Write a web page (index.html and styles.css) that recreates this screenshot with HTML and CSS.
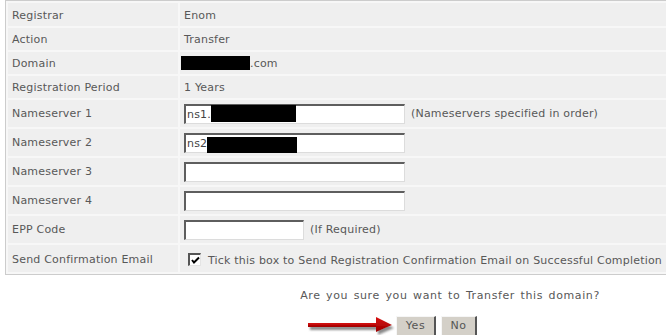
FILE: index.html
```html
<!DOCTYPE html>
<html>
<head>
<meta charset="utf-8">
<title>Transfer Domain</title>
<link rel="stylesheet" href="styles.css">
</head>
<body>
<div class="page">
  <table class="form">
    <tr class="trow">
      <td class="label">Registrar</td>
      <td class="field">Enom</td>
    </tr>
    <tr class="trow">
      <td class="label">Action</td>
      <td class="field">Transfer</td>
    </tr>
    <tr class="trow">
      <td class="label">Domain</td>
      <td class="field"><span class="redact-inline"></span>.com</td>
    </tr>
    <tr class="trow">
      <td class="label">Registration Period</td>
      <td class="field">1 Years</td>
    </tr>
    <tr class="irow">
      <td class="label">Nameserver 1</td>
      <td class="field"><span class="inwrap"><input class="text ns" type="text" value="ns1."><span class="redact r1"></span></span><span class="hint">(Nameservers specified in order)</span></td>
    </tr>
    <tr class="irow">
      <td class="label">Nameserver 2</td>
      <td class="field"><span class="inwrap"><input class="text ns" type="text" value="ns2"><span class="redact r2"></span></span></td>
    </tr>
    <tr class="irow">
      <td class="label">Nameserver 3</td>
      <td class="field"><span class="inwrap"><input class="text ns" type="text" value=""></span></td>
    </tr>
    <tr class="irow">
      <td class="label">Nameserver 4</td>
      <td class="field"><span class="inwrap"><input class="text ns" type="text" value=""></span></td>
    </tr>
    <tr class="irow">
      <td class="label">EPP Code</td>
      <td class="field"><span class="inwrap"><input class="text epp" type="text" value=""></span><span class="hint">(If Required)</span></td>
    </tr>
    <tr class="crow">
      <td class="label">Send Confirmation Email</td>
      <td class="field"><span class="check"><svg width="9" height="9" viewBox="0 0 9 9"><path d="M1 4 L3 6.5 L8 1.5" fill="none" stroke="#000" stroke-width="2"/></svg></span><span class="checktext">Tick this box to Send Registration Confirmation Email on Successful Completion</span></td>
    </tr>
  </table>

  <p class="confirm">Are you sure you want to Transfer this domain?</p>

  <div class="actions">
    <svg class="arrow" width="90" height="22" viewBox="0 0 90 22">
      <defs>
        <filter id="sh" x="-10%" y="-40%" width="130%" height="200%">
          <feGaussianBlur in="SourceAlpha" stdDeviation="1.2"/>
          <feOffset dx="2" dy="3" result="b"/>
          <feFlood flood-color="#6e6e6e" flood-opacity="0.8"/>
          <feComposite in2="b" operator="in"/>
          <feMerge><feMergeNode/><feMergeNode in="SourceGraphic"/></feMerge>
        </filter>
        <linearGradient id="rg" x1="0" y1="0" x2="0" y2="1">
          <stop offset="0" stop-color="#d81010"/>
          <stop offset="1" stop-color="#9c0000"/>
        </linearGradient>
      </defs>
      <g filter="url(#sh)">
        <rect x="2" y="8" width="70" height="4" fill="url(#rg)"/>
        <polygon points="70,2 86,10 70,17" fill="url(#rg)"/>
      </g>
    </svg>
    <button class="btn yes" type="button">Yes</button>
    <button class="btn no" type="button">No</button>
  </div>
</div>
</body>
</html>
```

FILE: styles.css
```css
html, body {
  margin: 0;
  padding: 0;
  background: #ffffff;
  overflow: hidden;
}

body {
  font-family: "DejaVu Sans", Verdana, sans-serif;
  font-size: 11px;
  letter-spacing: 0.2px;
  color: #585858;
}

.page {
  width: 890px;
  margin-left: 5px;
}

.form {
  width: 890px;
  border: 1px solid #cccccc;
  border-spacing: 2px;
  background: #f7f7f7;
}

.form td {
  background: #efefef;
  padding: 0 4px;
  white-space: nowrap;
  vertical-align: middle;
  line-height: 13px;
}

.form td.label {
  width: 162px;
}

.trow td { height: 22px; }
.trow:first-child td { padding-top: 1px; }
.irow td { height: 27px; }
.crow td { height: 25px; padding-top: 2px; }

.redact-inline {
  display: inline-block;
  width: 69px;
  height: 14px;
  background: #000;
  margin-left: -3px;
  vertical-align: -3px;
}

.inwrap {
  position: relative;
  display: inline-block;
  vertical-align: middle;
}

.text {
  display: block;
  box-sizing: border-box;
  height: 20px;
  margin: 0;
  padding: 0 1px;
  font-family: "DejaVu Sans", Verdana, sans-serif;
  font-size: 11px;
  letter-spacing: 0.2px;
  color: #444444;
  background: #ffffff;
  border-top: 2px solid #5e5e5e;
  border-left: 2px solid #5e5e5e;
  border-right: 1px solid #dcdcdc;
  border-bottom: 1px solid #dcdcdc;
  outline: none;
}

.ns { width: 221px; }
.epp { width: 120px; }

.redact {
  position: absolute;
  background: #000;
}

.r1 { left: 27px; top: 1px; width: 85px; height: 17px; }
.r2 { left: 23px; top: 4px; width: 90px; height: 16px; }

.hint {
  margin-left: 6px;
  vertical-align: middle;
}

.check {
  display: inline-flex;
  align-items: center;
  justify-content: center;
  box-sizing: border-box;
  width: 13px;
  height: 13px;
  margin-left: 4px;
  margin-right: 7px;
  background: #ffffff;
  border-top: 2px solid #555555;
  border-left: 2px solid #555555;
  border-right: 1px solid #e4e4e4;
  border-bottom: 1px solid #e4e4e4;
  vertical-align: middle;
}

.checktext { vertical-align: middle; }

.confirm {
  margin: 14px 0 0;
  text-align: center;
  line-height: 13px;
  letter-spacing: 0.6px;
  word-spacing: 1.5px;
}

.actions {
  display: flex;
  align-items: center;
  margin-top: 13px;
  padding-left: 301px;
}

.arrow {
  display: block;
}

.btn {
  box-sizing: border-box;
  height: 21px;
  margin: 0 5px 0 0;
  padding: 0;
  font-family: "DejaVu Sans", Verdana, sans-serif;
  font-size: 11px;
  letter-spacing: 0.5px;
  color: #555555;
  background: #d4d0c8;
  border-top: 1px solid #f6f6f6;
  border-left: 1px solid #f6f6f6;
  border-right: 2px solid #555555;
  border-bottom: 2px solid #555555;
}

.yes { width: 40px; }
.no { width: 36px; }
```
